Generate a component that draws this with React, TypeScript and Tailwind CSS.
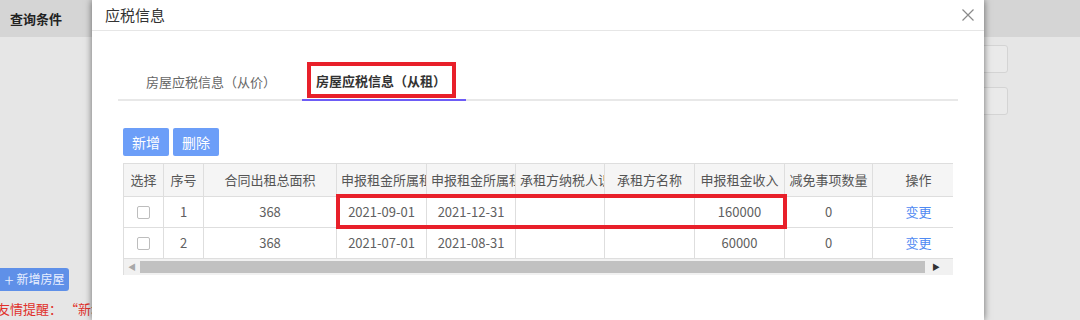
const cols = [
  { key: 'sel', title: '选择', w: 40 },
  { key: 'no', title: '序号', w: 40 },
  { key: 'area', title: '合同出租总面积', w: 133 },
  { key: 'start', title: '申报租金所属租期起', w: 90 },
  { key: 'end', title: '申报租金所属租期止', w: 89 },
  { key: 'tin', title: '承租方纳税人识别号', w: 89 },
  { key: 'name', title: '承租方名称', w: 90 },
  { key: 'income', title: '申报租金收入', w: 90 },
  { key: 'relief', title: '减免事项数量', w: 88 },
  { key: 'op', title: '操作', w: 92 },
]

const rows = [
  { no: 1, area: '368', start: '2021-09-01', end: '2021-12-31', tin: '', name: '', income: '160000', relief: '0' },
  { no: 2, area: '368', start: '2021-07-01', end: '2021-08-31', tin: '', name: '', income: '60000', relief: '0' },
]

function Checkbox() {
  return <span className="inline-block h-[13px] w-[13px] rounded-[2px] border border-[#bdbdbd] bg-white" />
}

function RentTable() {
  return (
    <div className="relative w-[830px]">
      <div className="overflow-hidden border-l border-t border-[#dedede]">
        <div className="flex w-max bg-[#f5f5f5] text-[13px] text-[#555]">
          {cols.map((c) => (
            <div
              key={c.key}
              style={{ width: c.w }}
              className="h-[33px] shrink-0 overflow-hidden whitespace-nowrap border-b border-r border-[#dedede] px-[4px] text-center leading-[32px]"
            >
              {c.title}
            </div>
          ))}
        </div>
        {rows.map((r) => (
          <div key={r.no} className="flex w-max text-[13px] text-[#606060]">
            {cols.map((c) => (
              <div
                key={c.key}
                style={{ width: c.w }}
                className="flex h-[31px] shrink-0 items-center justify-center overflow-hidden whitespace-nowrap border-b border-r border-[#dedede]"
              >
                {c.key === 'sel' && <Checkbox />}
                {c.key === 'op' && <span className="text-[#4f8af2]">变更</span>}
                {c.key !== 'sel' && c.key !== 'op' && String(r[c.key as keyof typeof r])}
              </div>
            ))}
          </div>
        ))}
        <div className="flex h-[16px] items-center bg-[#f1f1f1] pr-[6px]">
          <span className="w-[16px] text-center text-[8px] leading-none text-[#a8a8a8]">◀</span>
          <div className="h-[12px] flex-1 bg-[#c1c1c1]" />
          <span className="w-[22px] text-center text-[8px] leading-none text-[#333]">▶</span>
        </div>
      </div>
      <div className="pointer-events-none absolute left-[213px] top-[31px] h-[35px] w-[451px] border-4 border-[#e8202a]" />
    </div>
  )
}

export default function App() {
  return (
    <div className="relative h-[320px] w-[1080px] overflow-hidden bg-[#e6e6e6] font-['Noto_Sans_CJK_SC','Microsoft_YaHei',sans-serif]">
      <div className="flex h-[37px] items-center bg-[#d5d5d5] px-[10px] text-[13px] font-bold text-[#222]">查询条件</div>
      <div className="flex h-[283px]">
        <div className="flex w-[92px] flex-col justify-end pb-[2px]">
          <div className="flex h-[23px] w-[69px] items-center justify-center gap-[3px] rounded-r-[3px] bg-[#5f90e8] text-[12px] text-[#e8efff]">
            <span className="text-[17px] font-light leading-none">+</span>
            新增房屋
          </div>
          <div className="-ml-[3px] mt-[8px] whitespace-nowrap text-[13px] text-[#e0302a]">友情提醒： “新增房屋”</div>
        </div>
        <div className="ml-auto flex flex-col gap-[14px] pr-[72px] pt-[8px]">
          <div className="h-[28px] w-[40px] rounded-[3px] border border-[#d4d4d4] bg-[#eaeaea]" />
          <div className="h-[28px] w-[40px] rounded-[3px] border border-[#d4d4d4] bg-[#eaeaea]" />
        </div>
      </div>

      <div className="absolute left-[92px] top-0 h-[320px] w-[892px] bg-white shadow-[0_0_7px_rgba(0,0,0,0.55)]">
        <div className="flex h-[31px] items-center justify-between border-b border-[#e6e6e6] pl-[13px] pr-[8px]">
          <span className="text-[15px] text-[#333]">应税信息</span>
          <svg width="14" height="14" viewBox="0 0 14 14" className="mr-[1px]">
            <path d="M1.5 1.5 L12.5 12.5 M12.5 1.5 L1.5 12.5" stroke="#8a8a8a" strokeWidth="1.2" fill="none" />
          </svg>
        </div>
        <div className="px-[26px] pt-[31px]">
          <div className="flex border-b-2 border-[#e8e8e8]">
            <div className="-mb-[2px] flex h-[39px] w-[184px] items-center pl-[28px] text-[13px] text-[#666]">
              房屋应税信息（从价）
            </div>
            <div className="relative -mb-[2px] flex h-[39px] w-[164px] items-center justify-center border-b-2 border-[#6d5cf6] pr-[6px] text-[13px] font-bold text-[#333]">
              房屋应税信息（从租）
              <div className="absolute left-[5px] top-0 h-[36px] w-[149px] border-4 border-[#e8202a]" />
            </div>
          </div>
          <div className="px-[5px] pt-[27px]">
            <div className="flex gap-[4px]">
              <button className="h-[28px] w-[46px] rounded-[2px] bg-[#6c9ef8] text-[14px] text-white">新增</button>
              <button className="h-[28px] w-[46px] rounded-[2px] bg-[#6c9ef8] text-[14px] text-white">删除</button>
            </div>
            <div className="mt-[7px]">
              <RentTable />
            </div>
          </div>
        </div>
      </div>
    </div>
  )
}
